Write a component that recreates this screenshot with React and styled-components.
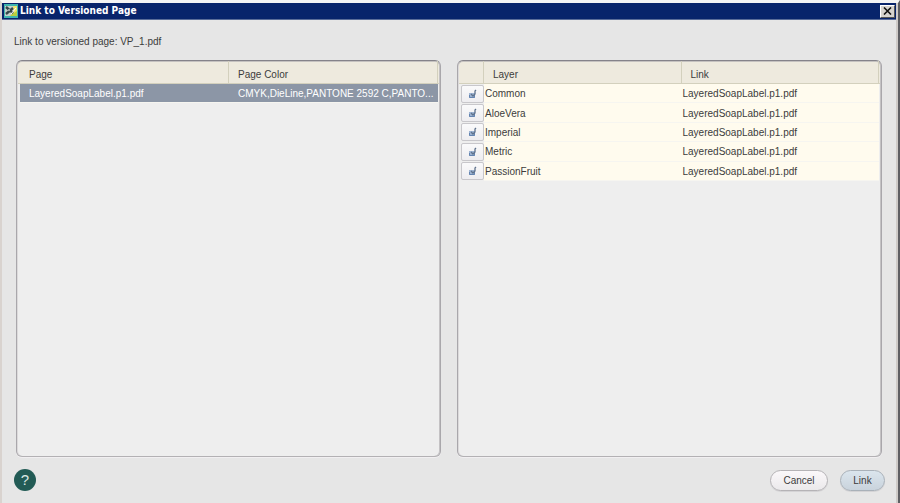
import React from "react";
import styled, { createGlobalStyle } from "styled-components";

const GlobalStyle = createGlobalStyle`
  * { box-sizing: border-box; }
  body { margin: 0; background: #e6e6e6; }
  body, button, input, table { font-family: "Liberation Sans", Arial, sans-serif; font-size: 10px; }
`;

const Dialog = styled.main`
  display: flex;
  flex-direction: column;
  min-height: 100vh;
  padding-right: 2px;
  border-style: solid;
  border-width: 3px 2px 0;
  border-color: #f4f4f4 #5f5f63 #d6d0cb #d9d3cf;
  background: #e6e6e6;
  box-shadow: inset -2px 0 #cfcbc8;
  color: #3c3c3c;
`;

const TitleBar = styled.header`
  display: flex;
  align-items: center;
  height: 17px;
  padding: 0 1px 0 2px;
  background: #08246b;
  border-bottom: 1px solid #5a6c98;
  color: #fff;
`;

const Title = styled.h1`
  flex: 1;
  margin: 0 0 0 2px;
  font: bold 10px/16px "DejaVu Sans Condensed", "DejaVu Sans", sans-serif;
`;

const CloseButton = styled.button`
  display: grid;
  place-items: center;
  width: 15px;
  height: 13px;
  padding: 0;
  border: 1px solid;
  border-color: #fff #555 #555 #fff;
  background: #d6d3ce;
`;

const Content = styled.div`
  flex: 1;
  display: flex;
  flex-direction: column;
  padding: 15px 14px 12px;
`;

const Caption = styled.p`
  margin: 0 -2px 11px;
  line-height: 14px;
`;

const Panels = styled.div`
  flex: 1;
  display: grid;
  grid-template-columns: minmax(0, 1fr) minmax(0, 1fr);
  gap: 16px;
`;

const Panel = styled.section`
  padding: 0 2px 0 3px;
  border: 1px solid;
  border-color: #85838a #a9a7ab #b3b1b4 #a9a7ab;
  border-radius: 6px;
  background: linear-gradient(#eeeade 22px, #d3d0bd 22px, #d3d0bd 23px, #eee 23px);
  box-shadow: inset 0 1px #c5c2c0, inset -1px 0 #c4c2c4, inset 1px 0 #dcdadb, 0 1px #f1eff1;
`;

const Table = styled.table`
  width: 100%;
  height: ${(p) => p.$height};
  table-layout: fixed;
  border-spacing: 0;
`;

const HeadCell = styled.th`
  width: ${(p) => p.$width};
  height: 23px;
  padding: 3px 0 0 9px;
  border-right: 1px solid #d3d0bd;
  font-weight: normal;
  text-align: left;
`;

const Row = styled.tr`
  height: 19px;
`;

const Cell = styled.td`
  padding: 2px 0 0 ${(p) => (p.$selected ? "9px" : "1px")};
  border-bottom: 1px solid #f6f5f0;
  background: ${(p) => (p.$selected ? "#8c96a6" : "#fffbee")};
  color: ${(p) => (p.$selected ? "#fff" : "#3c3c3c")};
  line-height: 14px;
  white-space: nowrap;
  overflow: hidden;
  text-overflow: ellipsis;
`;

const CheckCell = styled.td`
  padding: 0;
`;

const CheckButton = styled.label`
  position: relative;
  display: grid;
  place-items: center;
  height: 18px;
  border: 1px solid #c8c7cb;
  border-radius: 2px;
  background: linear-gradient(#fafafb, #eeedf0);
`;

const CheckInput = styled.input`
  position: absolute;
  inset: 0;
  width: 100%;
  height: 100%;
  margin: 0;
  opacity: 0;

  &:not(:checked) + svg path { visibility: hidden; }
`;

const Footer = styled.footer`
  display: flex;
  align-items: center;
  gap: 12px;
  margin: 12px -3px 0 -2px;
`;

const HelpButton = styled.button`
  width: 22px;
  height: 22px;
  margin-right: auto;
  padding: 0;
  border: 0;
  border-radius: 50%;
  background: #225b55;
  color: #dbe8e4;
  font-size: 15px;
  line-height: 22px;
`;

const ActionButton = styled.button`
  width: ${(p) => (p.$primary ? "45px" : "58px")};
  height: 21px;
  padding: 0;
  border: 1px solid ${(p) => (p.$primary ? "#a9b1b9" : "#b5b3b6")};
  border-radius: 11px;
  background: ${(p) =>
    p.$primary ? "linear-gradient(#dbe5ed, #c9d3dc)" : "linear-gradient(#fbf8fa, #ebe9eb)"};
  box-shadow: 0 1px #d4d3d5;
  color: #3c3c3c;
`;

const layers = ["Common", "AloeVera", "Imperial", "Metric", "PassionFruit"];

function AppIcon() {
  return (
    <svg width="14" height="14" viewBox="0 0 14 14" aria-hidden="true">
      <path fill="#3eb5ae" d="M0 0h14v14H0z" />
      <path fill="#c3d0cb" d="M1 2h12v10H1z" />
      <path fill="#b9cf3e" d="M13 5v7H6z" />
      <path fill="#efe36b" d="M9 2h4v5l-3 2z" />
      <path stroke="#35484a" strokeWidth="2.400" d="m2 3 7 6M2 10l7-6" />
      <path stroke="#fff" d="m7 10 5-6M4 6h2" />
    </svg>
  );
}

function CheckIcon() {
  return (
    <svg width="8" height="10" viewBox="0 0 8 10" aria-hidden="true">
      <path fill="#9db4d3" d="M0 4h6v5H0z" />
      <path fill="none" stroke="#6484b0" d="M.5 6v2.500h5V6" />
      <path fill="none" stroke="#5f728c" strokeWidth="1.300" d="M2 5l2 2L6 5V2l1-1" />
    </svg>
  );
}

export default function App() {
  return (
    <>
      <GlobalStyle />
      <Dialog>
        <TitleBar>
          <AppIcon />
          <Title>Link to Versioned Page</Title>
          <CloseButton aria-label="Close">
            <svg width="9" height="8" viewBox="0 0 9 8" aria-hidden="true">
              <path stroke="#111" strokeWidth="1.600" d="m1 .5 7 7m0-7-7 7" />
            </svg>
          </CloseButton>
        </TitleBar>
        <Content>
          <Caption>Link to versioned page: VP_1.pdf</Caption>
          <Panels>
            <Panel>
              <Table $height="42px">
                <thead>
                  <tr>
                    <HeadCell $width="50%">Page</HeadCell>
                    <HeadCell>Page Color</HeadCell>
                  </tr>
                </thead>
                <tbody>
                  <Row>
                    <Cell $selected>LayeredSoapLabel.p1.pdf</Cell>
                    <Cell $selected>CMYK,DieLine,PANTONE 2592 C,PANTO...</Cell>
                  </Row>
                </tbody>
              </Table>
            </Panel>
            <Panel>
              <Table $height="120px">
                <thead>
                  <tr>
                    <HeadCell $width="23px" aria-label="Linked" />
                    <HeadCell>Layer</HeadCell>
                    <HeadCell>Link</HeadCell>
                  </tr>
                </thead>
                <tbody>
                  {layers.map((layer) => (
                    <Row key={layer}>
                      <CheckCell>
                        <CheckButton>
                          <CheckInput type="checkbox" defaultChecked aria-label={layer} />
                          <CheckIcon />
                        </CheckButton>
                      </CheckCell>
                      <Cell>{layer}</Cell>
                      <Cell>LayeredSoapLabel.p1.pdf</Cell>
                    </Row>
                  ))}
                </tbody>
              </Table>
            </Panel>
          </Panels>
          <Footer>
            <HelpButton aria-label="Help">?</HelpButton>
            <ActionButton>Cancel</ActionButton>
            <ActionButton $primary>Link</ActionButton>
          </Footer>
        </Content>
      </Dialog>
    </>
  );
}
